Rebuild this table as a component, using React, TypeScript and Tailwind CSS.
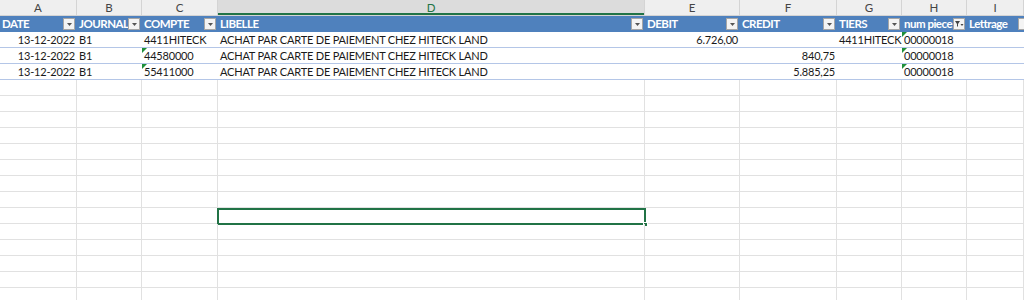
import React from 'react';

const cols = [
  { key: 'A', label: 'DATE', w: 'w-[77px]' },
  { key: 'B', label: 'JOURNAL', w: 'w-[65px]' },
  { key: 'C', label: 'COMPTE', w: 'w-[76px]' },
  { key: 'D', label: 'LIBELLE', w: 'w-[427px]' },
  { key: 'E', label: 'DEBIT', w: 'w-[95px]' },
  { key: 'F', label: 'CREDIT', w: 'w-[97px]' },
  { key: 'G', label: 'TIERS', w: 'w-[65px]' },
  { key: 'H', label: 'num piece', w: 'w-[65px]' },
  { key: 'I', label: 'Lettrage', w: 'w-[57px]' },
];

type Row = { cells: string[]; flags: boolean[] };

const rows: Row[] = [
  {
    cells: ['13-12-2022', 'B1', '4411HITECK', 'ACHAT PAR CARTE DE PAIEMENT CHEZ HITECK LAND', '6.726,00', '', '4411HITECK', '00000018', ''],
    flags: [false, false, false, false, false, false, false, true, false],
  },
  {
    cells: ['13-12-2022', 'B1', '44580000', 'ACHAT PAR CARTE DE PAIEMENT CHEZ HITECK LAND', '', '840,75', '', '00000018', ''],
    flags: [false, false, true, false, false, false, false, true, false],
  },
  {
    cells: ['13-12-2022', 'B1', '55411000', 'ACHAT PAR CARTE DE PAIEMENT CHEZ HITECK LAND', '', '5.885,25', '', '00000018', ''],
    flags: [false, false, true, false, false, false, false, true, false],
  },
];

const rightAligned = [0, 4, 5];

function FilterButton({ sorted }: { sorted?: boolean }) {
  return (
    <span className="absolute right-[2px] top-[2px] flex h-[12px] w-[12px] items-center justify-center border border-[#a6a6a6] bg-[#f4f4f4]">
      {sorted ? (
        <svg width="9" height="8" viewBox="0 0 9 8">
          <path d="M0 1h5L3 4v3L2 6V4z" fill="#444" />
          <path d="M5.5 4h3L7 6z" fill="#444" />
        </svg>
      ) : (
        <svg width="5" height="3" viewBox="0 0 5 3">
          <path d="M0 0h5L2.5 3z" fill="#555" />
        </svg>
      )}
    </span>
  );
}

function Flag() {
  return (
    <svg className="absolute left-0 top-0" width="5" height="5" viewBox="0 0 5 5">
      <path d="M0 0h5L0 5z" fill="#1f8f3a" />
    </svg>
  );
}

export default function App() {
  const emptyRows = Array.from({ length: 15 }, (_, i) => i);

  return (
    <div className="h-[300px] w-[1024px] overflow-hidden bg-white font-['Lato','Liberation_Sans',sans-serif] text-[#1a1a1a]">
      {/* column letters */}
      <div className="flex h-[16px] border-b border-[#d4d4d4] bg-[#efefef] text-[11.5px] text-[#444]">
        {cols.map((c) => (
          <div
            key={c.key}
            className={
              c.key === 'D'
                ? `${c.w} shrink-0 border-r border-[#d4d4d4] bg-[#dcdcdc] text-center leading-[15px] text-[#217346] shadow-[inset_0_-2px_0_#217346]`
                : `${c.w} shrink-0 border-r border-[#d4d4d4] text-center leading-[15px]`
            }
          >
            {c.key}
          </div>
        ))}
      </div>

      {/* table header */}
      <div className="flex h-[16px] bg-[#4f81bd] text-[11.5px] font-bold tracking-[-0.5px] text-white">
        {cols.map((c) => (
          <div key={c.key} className={`${c.w} relative shrink-0 overflow-hidden whitespace-nowrap pl-[2px] leading-[16px]`}>
            {c.label}
            {c.key !== 'I' ? <FilterButton sorted={c.key === 'H'} /> : null}
            {c.key === 'I' ? (
              <span className="absolute right-[-6px] top-[2px] h-[12px] w-[12px] border border-[#a6a6a6] bg-[#f4f4f4]" />
            ) : null}
          </div>
        ))}
      </div>

      {/* data */}
      {rows.map((r, ri) => (
        <div key={ri} className="flex h-[16px] border-b border-[#b4c6e7] text-[11px] tracking-[-0.2px]">
          {r.cells.map((v, ci) => (
            <div
              key={ci}
              className={`${cols[ci].w} relative shrink-0 whitespace-nowrap px-[2px] leading-[16px] ${
                rightAligned.includes(ci) ? 'text-right' : 'text-left'
              }`}
            >
              {r.flags[ci] ? <Flag /> : null}
              {v}
            </div>
          ))}
        </div>
      ))}

      {/* empty grid */}
      {emptyRows.map((i) => (
        <div key={i} className="flex h-[16px] border-b border-[#e1e1e1]">
          {cols.map((c) => (
            <div key={c.key} className={`${c.w} relative shrink-0 border-r border-[#e1e1e1]`}>
              {i === 8 && c.key === 'D' ? (
                <div className="absolute left-[-1px] top-0 h-[17px] w-[429px] border-2 border-[#217346]">
                  <span className="absolute bottom-[-4px] right-[-4px] h-[5px] w-[5px] border border-white bg-[#217346]" />
                </div>
              ) : null}
            </div>
          ))}
        </div>
      ))}
    </div>
  );
}
